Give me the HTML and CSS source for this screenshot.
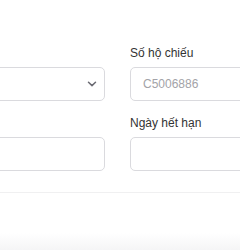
FILE: index.html
```html
<!DOCTYPE html>
<html lang="vi">
<head>
    <meta charset="UTF-8">
    <meta name="viewport" content="width=device-width, initial-scale=1.0">
    <title>Thông tin hộ chiếu</title>
    <link rel="stylesheet" href="styles.css">
</head>
<body>
    <div class="card">
        <div class="form-grid">
            <!-- Left column: label sits outside the visible area -->
            <div class="field">
                <label class="field-label" for="nationality"></label>
                <div class="select-wrap">
                    <select id="nationality" class="field-input">
                        <option value=""></option>
                    </select>
                    <svg class="chevron" width="10" height="6" viewBox="0 0 10 6">
                        <path d="M1.5 1.2 L5 4.6 L8.5 1.2" fill="none" stroke="#6b6b73" stroke-width="1.5" stroke-linecap="round" stroke-linejoin="round"/>
                    </svg>
                </div>
            </div>

            <!-- Số hộ chiếu -->
            <div class="field">
                <label class="field-label" for="passport-no">Số hộ chiếu</label>
                <input type="text" id="passport-no" class="field-input" placeholder="C5006886">
            </div>

            <div class="field">
                <label class="field-label" for="issue-date"></label>
                <input type="text" id="issue-date" class="field-input">
            </div>

            <!-- Ngày hết hạn -->
            <div class="field">
                <label class="field-label" for="expiry-date">Ngày hết hạn</label>
                <input type="text" id="expiry-date" class="field-input">
            </div>
        </div>
    </div>

    <div class="page-footer"></div>
</body>
</html>
```

FILE: styles.css
```css
body {
    margin: 0;
    padding: 0;
    background-color: #fff;
    font-family: 'Liberation Sans', Arial, sans-serif;
    color: #333;
    overflow: hidden;
}

.card {
    background-color: #fff;
    padding: 45px 0 21px 0;
    border-bottom: 1px solid #f0f0f1;
    box-shadow: 0 1px 2px rgba(0, 0, 0, 0.03);
}

.form-grid {
    display: grid;
    grid-template-columns: 200px 200px;
    column-gap: 25px;
    row-gap: 14px;
    margin-left: -95px;
}

.field {
    display: flex;
    flex-direction: column;
    gap: 6px;
}

.field-label {
    align-self: flex-start;
    min-height: 16px;
    font-size: 12px;
    line-height: 16px;
    color: #333;
}

.field-input {
    box-sizing: border-box;
    width: 100%;
    height: 34px;
    padding: 0 12px;
    border: 1px solid #dadade;
    border-radius: 5px;
    background-color: #fff;
    font-family: inherit;
    font-size: 12px;
    color: #333;
    outline: none;
}

.field-input::placeholder {
    color: #a3a3a8;
}

.select-wrap {
    position: relative;
}

select.field-input {
    appearance: none;
    -webkit-appearance: none;
}

.chevron {
    position: absolute;
    right: 8px;
    top: 14px;
}

.page-footer {
    height: 57px;
    background: linear-gradient(to bottom, #fff 0%, #fff 70%, #f5f5f6 100%);
}
```
